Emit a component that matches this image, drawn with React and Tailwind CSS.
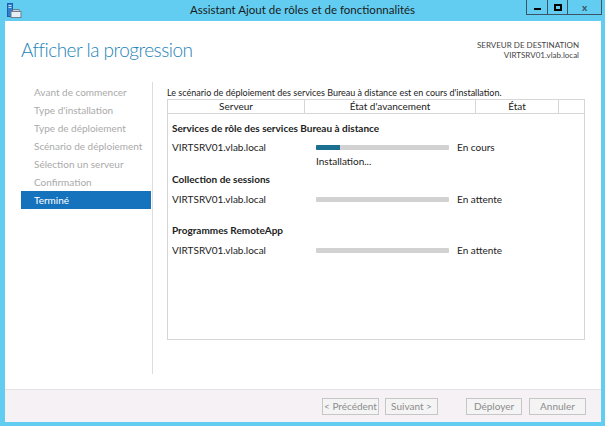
import React from 'react';

const font = { fontFamily: '"Segoe UI", Lato, "Open Sans", sans-serif' };

const steps = [
    'Avant de commencer',
    "Type d'installation",
    'Type de déploiement',
    'Scénario de déploiement',
    'Sélection un serveur',
    'Confirmation',
    'Terminé',
];

function AppIcon() {
    return (
        <svg width="16" height="16" viewBox="0 0 16 16">
            <rect x="1.5" y="0.5" width="5" height="13" fill="#2f7fd0" stroke="#1c5ea8" />
            <rect x="2.5" y="2" width="3" height="1" fill="#bfe0ff" />
            <rect x="2.5" y="4" width="3" height="1" fill="#bfe0ff" />
            <rect x="5" y="8.5" width="10" height="6" fill="#e8eef3" stroke="#6d7f8c" />
            <rect x="7" y="6.5" width="6" height="2" fill="#c9d3da" stroke="#6d7f8c" />
        </svg>
    );
}

function ProgressBar({ value }) {
    return (
        <div className="w-[133px] h-[5px] bg-[#d2d2d2] rounded-[1px] overflow-hidden">
            <div className="h-full bg-[#1b6f91]" style={{ width: `${value}%` }}></div>
        </div>
    );
}

function ServerRow({ value, status }) {
    return (
        <div className="flex items-center h-[14px]">
            <div className="w-[144px] shrink-0">VIRTSRV01.vlab.local</div>
            <ProgressBar value={value} />
            <div className="ml-[8px]">{status}</div>
        </div>
    );
}

export default function App() {
    return (
        <div style={font} className="w-[605px] h-[426px] bg-[#62cdf0] flex flex-col overflow-hidden">
            {/* TITLE BAR */}
            <div className="h-[21px] flex items-start relative shrink-0">
                <div className="ml-[6px] mt-[3px]"><AppIcon /></div>
                <div className="absolute left-0 right-0 top-[2px] text-center text-[11.5px] text-[#1b1b1b] leading-[16px]">
                    Assistant Ajout de rôles et de fonctionnalités
                </div>
                <div className="ml-auto mr-[3px] flex h-[15px] border border-t-0 border-[#3b5566]">
                    <div className="w-[21px] flex items-center justify-center border-r border-[#3b5566]">
                        <div className="w-[7px] h-[2px] bg-black mt-[3px]"></div>
                    </div>
                    <div className="w-[20px] flex items-center justify-center border-r border-[#3b5566]">
                        <div className="w-[8px] h-[7px] border-2 border-black"></div>
                    </div>
                    <div className="w-[33px] flex items-center justify-center text-[10px] font-bold text-[#38505e] leading-none">x</div>
                </div>
            </div>

            {/* BODY */}
            <div className="flex-1 flex flex-col ml-[5px] mr-[4px] mb-[4px] bg-white">
                <div className="flex-1 flex flex-col pl-[16px]">
                    {/* HEADER */}
                    <div className="h-[61px] flex justify-between shrink-0">
                        <h1 className="mt-[15px] text-[19px] tracking-[-0.5px] font-light text-[#1d84b8] leading-[28px]">Afficher la progression</h1>
                        <div className="mt-[19px] mr-[22px] text-right text-[8px] leading-[10px] text-[#444]">
                            <div>SERVEUR DE DESTINATION</div>
                            <div>VIRTSRV01.vlab.local</div>
                        </div>
                    </div>

                    <div className="flex-1 flex pb-[15px]">
                        {/* STEPS */}
                        <div className="w-[131px] shrink-0 pt-[1px] text-[10px]">
                            {steps.map((s, i) => (
                                <div
                                    key={s}
                                    className={`h-[18px] leading-[18px] pl-[13px] w-[130px] ${i === steps.length - 1 ? 'bg-[#1573bd] text-white' : 'text-[#aaaaaa]'}`}
                                >
                                    {s}
                                </div>
                            ))}
                        </div>
                        <div className="w-px bg-[#dcdcdc]"></div>

                        {/* MAIN */}
                        <div className="flex-1 pl-[14px] pr-[16px] text-[10px] text-[#222]">
                            <div className="h-[17px] leading-[17px] pt-[2px] text-[9px]">
                                Le scénario de déploiement des services Bureau à distance est en cours d'installation.
                            </div>
                            <div className="h-[241px] border border-[#d6d6d6]">
                                <div className="flex h-[14px] leading-[13px] border-b border-[#d6d6d6] text-center">
                                    <div className="w-[137px] border-r border-[#d6d6d6]">Serveur</div>
                                    <div className="w-[171px] border-r border-[#d6d6d6]">État d'avancement</div>
                                    <div className="w-[83px] border-r border-[#d6d6d6]">État</div>
                                    <div className="flex-1"></div>
                                </div>
                                <div className="pl-[4px]">
                                    <div className="mt-[7px] h-[14px] leading-[14px] font-bold">Services de rôle des services Bureau à distance</div>
                                    <div className="mt-[5px]"><ServerRow value={18} status="En cours" /></div>
                                    <div className="pl-[144px] h-[14px] leading-[14px]">Installation...</div>
                                    <div className="mt-[4px] h-[14px] leading-[14px] font-bold">Collection de sessions</div>
                                    <div className="mt-[6px]"><ServerRow value={0} status="En attente" /></div>
                                    <div className="mt-[17px] h-[14px] leading-[14px] font-bold">Programmes RemoteApp</div>
                                    <div className="mt-[6px]"><ServerRow value={0} status="En attente" /></div>
                                </div>
                            </div>
                        </div>
                    </div>
                </div>

                {/* FOOTER */}
                <div className="h-[33px] shrink-0 bg-[#f5f1f5] border-t border-[#e4e1e4] flex items-center justify-end pr-[15px] text-[10px] text-[#8c8c8c]">
                    <button className="w-[57px] h-[17px] whitespace-nowrap border border-[#c6c6c6] bg-[#f4f4f4]">&lt; Précédent</button>
                    <button className="ml-[6px] w-[53px] h-[17px] whitespace-nowrap border border-[#c6c6c6] bg-[#f4f4f4]">Suivant &gt;</button>
                    <button className="ml-[28px] w-[56px] h-[17px] whitespace-nowrap border border-[#c6c6c6] bg-[#f4f4f4]">Déployer</button>
                    <button className="ml-[7px] w-[57px] h-[17px] whitespace-nowrap border border-[#c6c6c6] bg-[#f4f4f4]">Annuler</button>
                </div>
            </div>
        </div>
    );
}
